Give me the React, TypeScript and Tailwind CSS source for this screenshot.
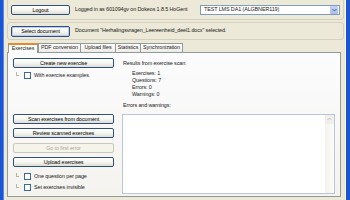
import React from "react";

const btn =
  "flex items-center justify-center rounded-[2px] border border-[#2f4f7f] bg-gradient-to-b from-[#ffffff] via-[#f6f6f2] to-[#deddd3] text-black";

function Check({ label }: { label: string }) {
  return (
    <div className="flex items-center h-[7px]">
      <div className="ml-[3px] w-[3px] h-[4px] -mt-[3px] border-l border-b border-[#b5b5a8]" />
      <div className="ml-[5px] w-[7px] h-[7px] border border-[#3c6a98] bg-white" />
      <span className="ml-[3px] leading-none">{label}</span>
    </div>
  );
}

export default function App() {
  return (
    <div
      className="w-[350px] h-[200px] overflow-hidden bg-[#ece9d8] flex text-[5.4px] tracking-[-0.1px] whitespace-nowrap text-[#1a1a1a]"
      style={{ fontFamily: '"Liberation Sans", Arial, sans-serif' }}
    >
      <div className="w-[4px] h-full bg-[#1a55d4] border-r border-[#5b86e6]" />
      <div className="flex-1 flex flex-col pl-[3px] pr-[1px]">
        {/* panel 1 */}
        <div className="mt-[-3px] h-[23px] border border-[#d4d0c0] rounded-[3px] flex items-center pl-[3px] pr-[3px] pt-[3px]">
          <div className={btn + " w-[59px] h-[10px] shrink-0"}>Logout</div>
          <span className="ml-[5px] leading-none">Logged in as 601094gv on Dokeos 1.8.5 HoGent</span>
          <div className="ml-auto w-[140px] h-[10px] shrink-0 border border-[#7f9db9] bg-white flex items-center">
            <span className="ml-[3px] leading-none">TEST LMS DA1 (ALGBNER119)</span>
            <div className="ml-auto mr-[1px] w-[8px] h-[8px] rounded-[1px] bg-gradient-to-b from-[#c6d3f7] to-[#a8bcec] flex items-center justify-center">
              <svg width="5" height="4" viewBox="0 0 5 4">
                <path d="M0.5 1 L2.5 3 L4.5 1" stroke="#4d6185" strokeWidth="1" fill="none" />
              </svg>
            </div>
          </div>
        </div>
        {/* panel 2 */}
        <div className="mt-[2px] h-[18px] border border-[#d4d0c0] rounded-[3px] flex items-center pl-[3px]">
          <div className={btn + " w-[59px] h-[11px] shrink-0 border-[#2a4a8a] shadow-[inset_0_0_0_1px_#b7cdf5]"}>Select document</div>
          <span className="ml-[5px] leading-none">Document "Herhalingsvragen_Leereenheid_deel1.docx" selected.</span>
        </div>
        {/* tabs */}
        <div className="mt-[3px] flex items-end h-[9px] pl-[1px]">
          <div className="relative z-10 h-[10px] w-[30px] bg-white border border-b-0 border-[#919b9c] border-t-[2px] border-t-[#e68b2c] flex items-center justify-center mb-[-1px] leading-none">
            Exercises
          </div>
          <div className="h-[9px] w-[43px] bg-gradient-to-b from-white to-[#ecebe5] border border-b-0 border-[#919b9c] flex items-center justify-center leading-none">
            PDF conversion
          </div>
          <div className="h-[9px] w-[35px] bg-gradient-to-b from-white to-[#ecebe5] border border-b-0 border-l-0 border-[#919b9c] flex items-center justify-center leading-none">
            Upload files
          </div>
          <div className="h-[9px] w-[25px] bg-gradient-to-b from-white to-[#ecebe5] border border-b-0 border-l-0 border-[#919b9c] flex items-center justify-center leading-none">
            Statistics
          </div>
          <div className="h-[9px] w-[42px] bg-gradient-to-b from-white to-[#ecebe5] border border-b-0 border-l-0 border-[#919b9c] flex items-center justify-center leading-none">
            Synchronization
          </div>
        </div>
        {/* tab body */}
        <div className="h-[145px] w-[334px] border border-[#919b9c] bg-gradient-to-b from-[#fcfcfe] to-[#f4f3ee] flex pl-[5px]">
          <div className="w-[101px] flex flex-col">
            <div className={btn + " mt-[5px] h-[10px]"}>Create new exercise</div>
            <div className="mt-[4px]"><Check label="With exercise examples." /></div>
            <div className={btn + " mt-[35px] h-[10px]"}>Scan exercises from document</div>
            <div className={btn + " mt-[4px] h-[10px]"}>Review scanned exercises</div>
            <div className="mt-[5px] h-[10px] rounded-[2px] border border-[#c9c7ba] bg-[#f5f4ea] text-[#aca899] flex items-center justify-center">
              Go to first error
            </div>
            <div className={btn + " mt-[4px] h-[10px]"}>Upload exercises</div>
            <div className="mt-[6px]"><Check label="One question per page" /></div>
            <div className="mt-[4px]"><Check label="Set exercises invisible" /></div>
          </div>
          <div className="ml-[9px] flex-1 flex flex-col">
            <div className="mt-[8px] leading-none">Results from exercise scan:</div>
            <div className="ml-[9px] mt-[4px] flex flex-col gap-[1px] leading-[6px]">
              <span>Exercises: 1</span>
              <span>Questions: 7</span>
              <span>Errors: 0</span>
              <span>Warnings: 0</span>
            </div>
            <div className="mt-[6px] leading-none">Errors and warnings:</div>
            <div className="mt-[5px] ml-[-1px] w-[213px] h-[80px] border border-[#b7c6dc] bg-white flex justify-end">
              <div className="w-[9px] h-full bg-gradient-to-r from-[#f3f3ee] to-[#fbfbf8] flex flex-col">
                <div className="h-[9px] w-full bg-[#f0efe9] flex items-center justify-center">
                  <svg width="5" height="4" viewBox="0 0 5 4">
                    <path d="M0.5 3 L2.5 1 L4.5 3" stroke="#c5c3b8" strokeWidth="1" fill="none" />
                  </svg>
                </div>
              </div>
            </div>
          </div>
        </div>
      </div>
      <div className="w-[5px] h-full border-l border-[#f6f5ef] bg-[#1a55d4]" />
    </div>
  );
}
